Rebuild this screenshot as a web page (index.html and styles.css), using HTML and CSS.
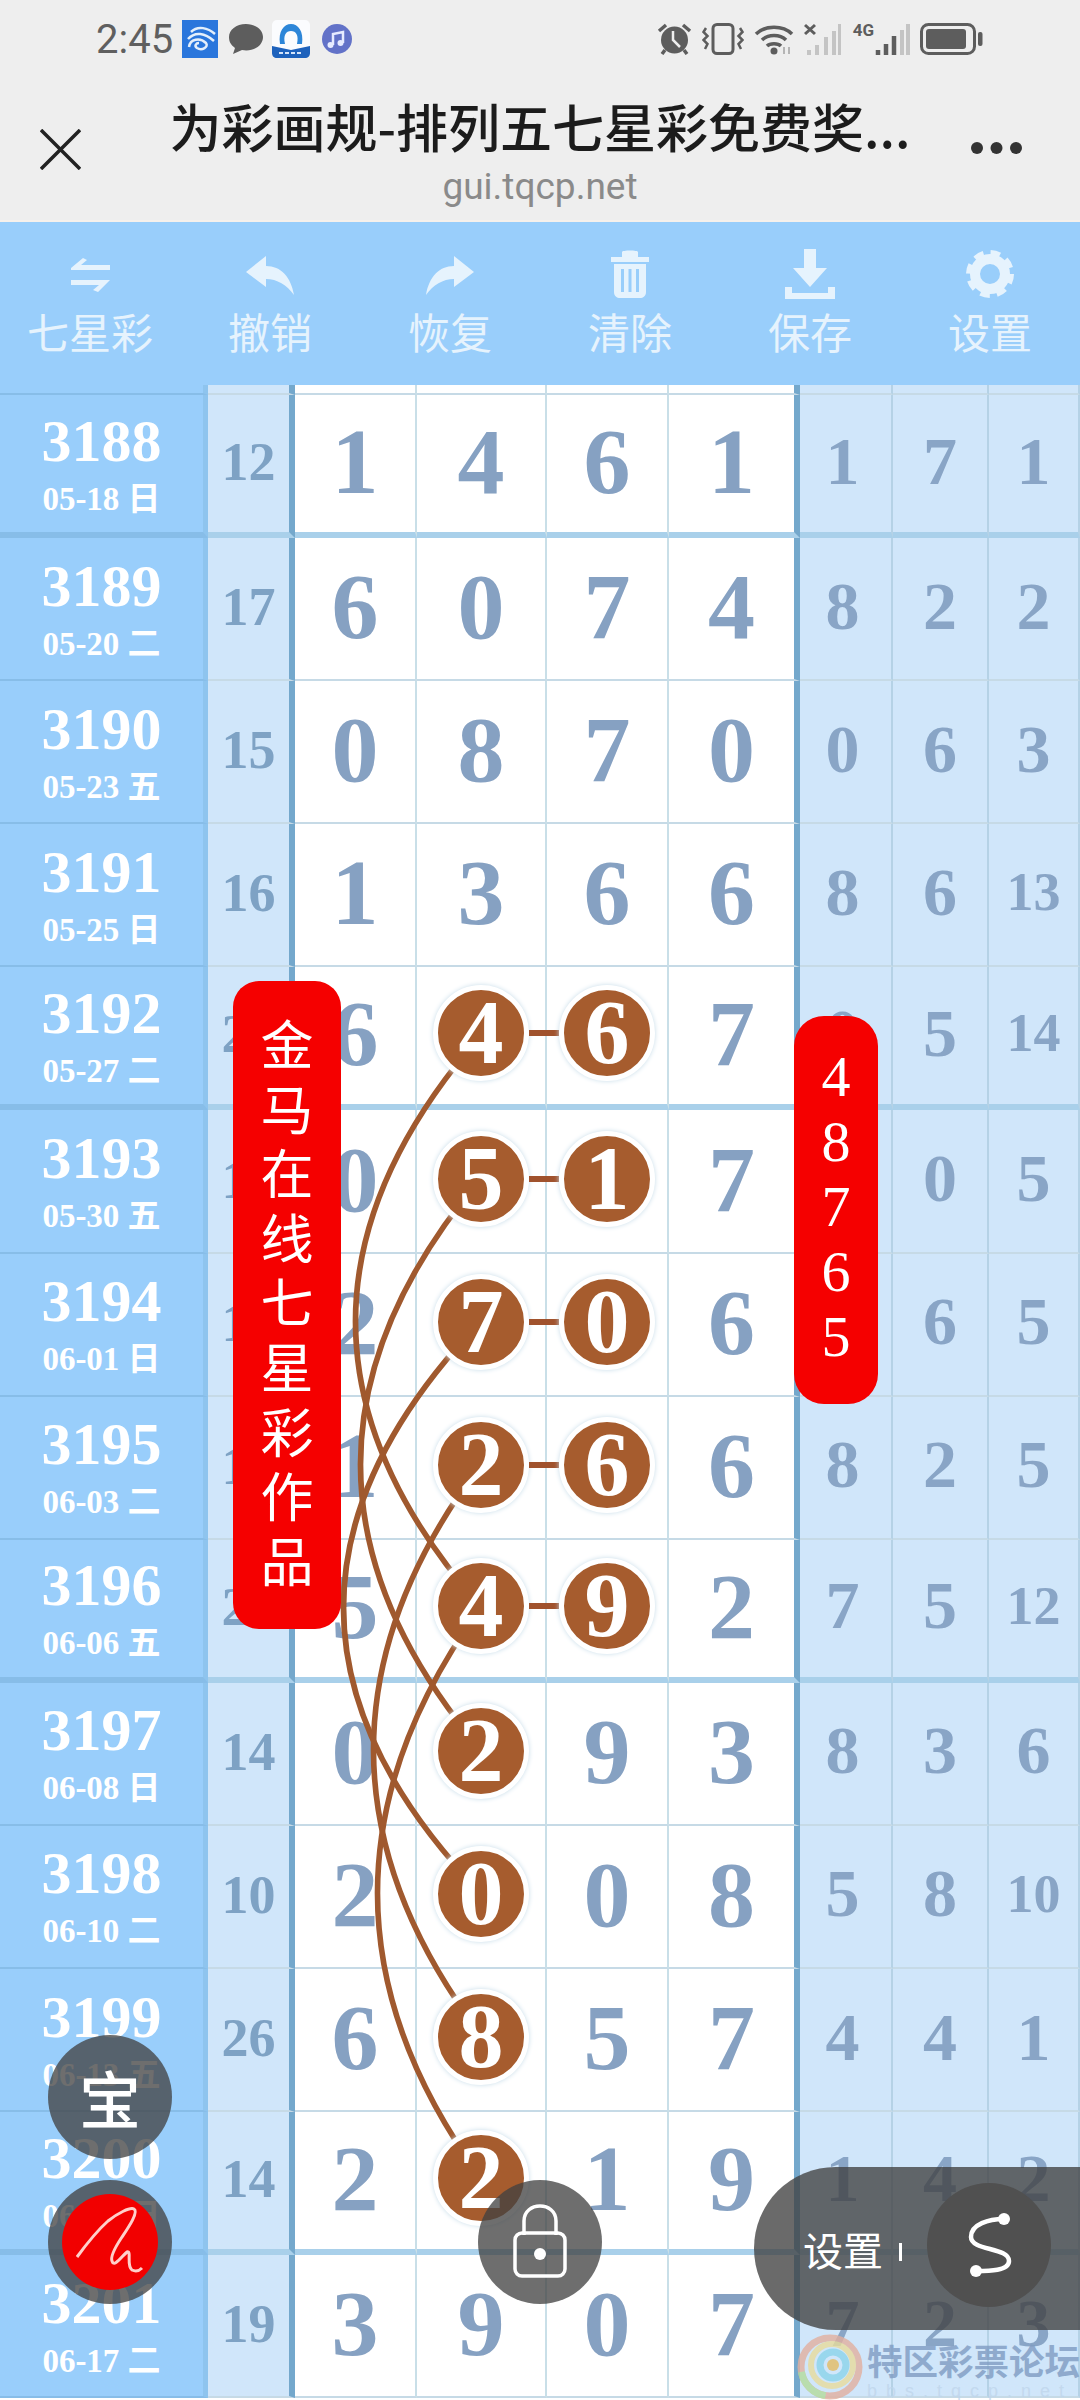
FILE: index.html
```html
<!DOCTYPE html>
<html lang="zh">
<head>
	<meta charset="utf-8">
	<title>为彩画规-排列五七星彩免费奖表</title>
	<link rel="stylesheet" href="styles.css">
</head>
<body>
<div class="page">
	<div class="status">
		<span class="time">2:45</span>
		<svg class="app" width="36" height="38" viewBox="0 0 36 38"><rect width="36" height="38" fill="#2a76dc"/><path d="M9 12C16 5 26 8 33 14M6 19C13 11 23 13 32 21M7 27C8 19 18 17 24 23C27 27 20 31 15 28C12 26 14 23 17 23" fill="none" stroke="#e4effb" stroke-width="2.500"/></svg>
		<svg class="app bubble" width="34" height="32" viewBox="0 0 34 32"><path d="M17 1C7 1 0 7 0 14C0 19 2 22 6 25L4 31L13 27C24 29 34 23 34 14C34 7 27 1 17 1Z" fill="#5d5d5d"/></svg>
		<svg class="app" width="38" height="38" viewBox="0 0 38 38"><rect width="38" height="38" rx="5" fill="#fbfcfe"/><path d="M8 24C6 11 12 4 19 4C26 4 32 11 30 24L25 24C27 15 24 11 19 11C14 11 11 15 13 24Z" fill="#2d86d8"/><path d="M0 26L19 30L38 26V33C38 36 36 38 33 38H5C2 38 0 36 0 33Z" fill="#1e62bc"/><path d="M7 33H31" stroke="#d6e6fb" stroke-width="2" stroke-dasharray="4 2"/></svg>
		<svg class="app" width="32" height="32" viewBox="0 0 32 32"><circle cx="16" cy="16" r="15" fill="#6272c8"/><path d="M12 22V11L22 9V20" fill="none" stroke="#e6ebff" stroke-width="2.500"/><circle cx="9.500" cy="22" r="3" fill="#e6ebff"/><circle cx="19.500" cy="20" r="3" fill="#e6ebff"/></svg>
		<span class="status-gap"></span>
		<svg width="35" height="32" viewBox="0 0 35 32"><circle cx="17.500" cy="17" r="13.500" fill="#5d5d5d"/><path d="M16 8V17L23 24" fill="none" stroke="#eeeeee" stroke-width="2.500"/><path d="M2 8L9 2M33 8L26 2M8 27L5 31M27 27L30 31" stroke="#5d5d5d" stroke-width="3.500"/></svg>
		<svg width="42" height="32" viewBox="0 0 42 32"><rect x="11" y="1.500" width="20" height="29" rx="4" fill="none" stroke="#5d5d5d" stroke-width="3"/><path d="M4 5L1.500 9L5.500 13L1.500 17L5.500 21L3 26M38 5L40.500 9L36.500 13L40.500 17L36.500 21L39 26" fill="none" stroke="#5d5d5d" stroke-width="2.500"/></svg>
		<svg width="40" height="32" viewBox="0 0 40 32"><path d="M2 11C11 2 29 2 38 11M8 17C14 11 26 11 32 17M13 23C16 20 24 20 27 23" fill="none" stroke="#5d5d5d" stroke-width="3.500"/><circle cx="20" cy="28" r="3.500" fill="#5d5d5d"/><path d="M30 24V31M35 31V24" stroke="#b5b5b5" stroke-width="2"/></svg>
		<svg width="37" height="32" viewBox="0 0 37 32"><path d="M1 2L11 11M11 2L1 11" stroke="#5d5d5d" stroke-width="3"/><path d="M5 32V27M13 32V22M22 32V14M30 32V8M36 32V1" stroke="#c4c4c4" stroke-width="4"/></svg>
		<span class="net">4G</span>
		<svg class="bars" width="35" height="32" viewBox="0 0 35 32"><path d="M3 32V27M11 32V21M19 32V13" stroke="#5d5d5d" stroke-width="4.500"/><path d="M27 32V7M33 32V1" stroke="#c4c4c4" stroke-width="4"/></svg>
		<svg width="63" height="32" viewBox="0 0 63 32"><rect x="1.500" y="1.500" width="53" height="29" rx="7" fill="none" stroke="#5d5d5d" stroke-width="3"/><rect x="6" y="6" width="40" height="20" rx="3" fill="#5d5d5d"/><rect x="58" y="9" width="4.500" height="14" rx="2" fill="#5d5d5d"/></svg>
	</div>

	<div class="titlebar">
		<svg class="close" width="41" height="41" viewBox="0 0 41 41"><path d="M1 1L40 40M40 1L1 40" stroke="#222" stroke-width="3.500"/></svg>
		<div class="title-box">
			<div class="title">为彩画规-排列五七星彩免费奖...</div>
			<div class="domain">gui.tqcp.net</div>
		</div>
		<svg class="more" width="53" height="14" viewBox="0 0 53 14"><circle cx="7" cy="7" r="6" fill="#333"/><circle cx="26.500" cy="7" r="6" fill="#333"/><circle cx="46" cy="7" r="6" fill="#333"/></svg>
	</div>

	<div class="toolbar">
		<div class="tool">
			<svg width="50" height="50" viewBox="0 0 50 50"><path d="M6 19L18 9L22 11L16 16H45V21H6ZM6 31H45L33 43L28 41L34 36H6Z" fill="#e6f3fd"/></svg>
			<span>七星彩</span>
		</div>
		<div class="tool">
			<svg width="50" height="50" viewBox="0 0 50 50"><path d="M21 7L1 23L21 38V30C32 30 42 36 49 46C46 28 36 17 21 17Z" fill="#e6f3fd"/></svg>
			<span>撤销</span>
		</div>
		<div class="tool">
			<svg class="flip" width="50" height="50" viewBox="0 0 50 50"><path d="M21 7L1 23L21 38V30C32 30 42 36 49 46C46 28 36 17 21 17Z" fill="#e6f3fd"/></svg>
			<span>恢复</span>
		</div>
		<div class="tool">
			<svg width="50" height="50" viewBox="0 0 50 50"><path d="M6 8H17V3C17 1 33 1 33 3V8H44V13H6ZM9 15H41V43C41 47 38 49 35 49H15C12 49 9 47 9 43Z" fill="#e6f3fd"/><path d="M17.500 20V43M25 20V43M32.500 20V43" stroke="#99cefb" stroke-width="3"/></svg>
			<span>清除</span>
		</div>
		<div class="tool">
			<svg width="50" height="50" viewBox="0 0 50 50"><path d="M19 0H31V19H42L25 38L8 19H19ZM0 38H7V44H43V38H50V50H0Z" fill="#e6f3fd"/></svg>
			<span>保存</span>
		</div>
		<div class="tool">
			<svg width="50" height="50" viewBox="0 0 50 50"><circle cx="25" cy="25" r="15" fill="none" stroke="#e6f3fd" stroke-width="10"/><circle cx="25" cy="25" r="20" fill="none" stroke="#e6f3fd" stroke-width="8" stroke-dasharray="9 6.700"/></svg>
			<span>设置</span>
		</div>
	</div>

	<div class="board">
		<div class="row stub"><div class="c-id"></div><div class="c-sum"></div><div class="c-n"></div><div class="c-n"></div><div class="c-n"></div><div class="c-n end"></div><div class="c-r"></div><div class="c-r"></div><div class="c-r"></div></div>

		<div class="row thick">
			<div class="c-id"><b>3188</b><small>05-18 日</small></div><div class="c-sum">12</div>
			<div class="c-n">1</div><div class="c-n">4</div><div class="c-n">6</div><div class="c-n end">1</div>
			<div class="c-r">1</div><div class="c-r">7</div><div class="c-r">1</div>
		</div>
		<div class="row">
			<div class="c-id"><b>3189</b><small>05-20 二</small></div><div class="c-sum">17</div>
			<div class="c-n">6</div><div class="c-n">0</div><div class="c-n">7</div><div class="c-n end">4</div>
			<div class="c-r">8</div><div class="c-r">2</div><div class="c-r">2</div>
		</div>
		<div class="row">
			<div class="c-id"><b>3190</b><small>05-23 五</small></div><div class="c-sum">15</div>
			<div class="c-n">0</div><div class="c-n">8</div><div class="c-n">7</div><div class="c-n end">0</div>
			<div class="c-r">0</div><div class="c-r">6</div><div class="c-r">3</div>
		</div>
		<div class="row">
			<div class="c-id"><b>3191</b><small>05-25 日</small></div><div class="c-sum">16</div>
			<div class="c-n">1</div><div class="c-n">3</div><div class="c-n">6</div><div class="c-n end">6</div>
			<div class="c-r">8</div><div class="c-r">6</div><div class="c-r two">13</div>
		</div>
		<div class="row thick">
			<div class="c-id"><b>3192</b><small>05-27 二</small></div><div class="c-sum">20</div>
			<div class="c-n">6</div><div class="c-n"><span class="ball link">4</span></div><div class="c-n"><span class="ball">6</span></div><div class="c-n end">7</div>
			<div class="c-r">0</div><div class="c-r">5</div><div class="c-r two">14</div>
		</div>
		<div class="row">
			<div class="c-id"><b>3193</b><small>05-30 五</small></div><div class="c-sum">13</div>
			<div class="c-n">0</div><div class="c-n"><span class="ball link">5</span></div><div class="c-n"><span class="ball">1</span></div><div class="c-n end">7</div>
			<div class="c-r">4</div><div class="c-r">0</div><div class="c-r">5</div>
		</div>
		<div class="row">
			<div class="c-id"><b>3194</b><small>06-01 日</small></div><div class="c-sum">15</div>
			<div class="c-n">2</div><div class="c-n"><span class="ball link">7</span></div><div class="c-n"><span class="ball">0</span></div><div class="c-n end">6</div>
			<div class="c-r">3</div><div class="c-r">6</div><div class="c-r">5</div>
		</div>
		<div class="row">
			<div class="c-id"><b>3195</b><small>06-03 二</small></div><div class="c-sum">15</div>
			<div class="c-n">1</div><div class="c-n"><span class="ball link">2</span></div><div class="c-n"><span class="ball">6</span></div><div class="c-n end">6</div>
			<div class="c-r">8</div><div class="c-r">2</div><div class="c-r">5</div>
		</div>
		<div class="row thick">
			<div class="c-id"><b>3196</b><small>06-06 五</small></div><div class="c-sum">24</div>
			<div class="c-n">5</div><div class="c-n"><span class="ball link">4</span></div><div class="c-n"><span class="ball">9</span></div><div class="c-n end">2</div>
			<div class="c-r">7</div><div class="c-r">5</div><div class="c-r two">12</div>
		</div>
		<div class="row">
			<div class="c-id"><b>3197</b><small>06-08 日</small></div><div class="c-sum">14</div>
			<div class="c-n">0</div><div class="c-n"><span class="ball">2</span></div><div class="c-n">9</div><div class="c-n end">3</div>
			<div class="c-r">8</div><div class="c-r">3</div><div class="c-r">6</div>
		</div>
		<div class="row">
			<div class="c-id"><b>3198</b><small>06-10 二</small></div><div class="c-sum">10</div>
			<div class="c-n">2</div><div class="c-n"><span class="ball">0</span></div><div class="c-n">0</div><div class="c-n end">8</div>
			<div class="c-r">5</div><div class="c-r">8</div><div class="c-r two">10</div>
		</div>
		<div class="row">
			<div class="c-id"><b>3199</b><small>06-13 五</small></div><div class="c-sum">26</div>
			<div class="c-n">6</div><div class="c-n"><span class="ball">8</span></div><div class="c-n">5</div><div class="c-n end">7</div>
			<div class="c-r">4</div><div class="c-r">4</div><div class="c-r">1</div>
		</div>
		<div class="row thick">
			<div class="c-id"><b>3200</b><small>06-15 日</small></div><div class="c-sum">14</div>
			<div class="c-n">2</div><div class="c-n"><span class="ball">2</span></div><div class="c-n">1</div><div class="c-n end">9</div>
			<div class="c-r">1</div><div class="c-r">4</div><div class="c-r">2</div>
		</div>
		<div class="row">
			<div class="c-id"><b>3201</b><small>06-17 二</small></div><div class="c-sum">19</div>
			<div class="c-n">3</div><div class="c-n">9</div><div class="c-n">0</div><div class="c-n end">7</div>
			<div class="c-r">7</div><div class="c-r">2</div><div class="c-r">3</div>
		</div>

		<svg class="curves" width="1080" height="2015" viewBox="0 385 1080 2015">
			<path d="M481 1035Q230 1322 481 1607"/>
			<path d="M481 1178Q240 1465 481 1750"/>
			<path d="M481 1321Q206 1608 481 1893"/>
			<path d="M481 1464Q266 1750 481 2035"/>
			<path d="M481 1607Q274 1894 481 2178"/>
		</svg>
	</div>

	<div class="pill pill-left">金马在线七星彩作品</div>
	<div class="pill pill-right">48765</div>

	<div class="fab fab-bao">宝</div>
	<div class="fab fab-sign">
		<svg width="96" height="96" viewBox="0 0 96 96"><circle cx="48" cy="48" r="48" fill="#f20000"/><path d="M15 63C26 48 36 36 46 27C56 19 68 13 72 15C77 18 66 34 60 43C54 52 48 62 50 67C52 74 60 62 65 58C70 56 64 72 70 76C74 78 78 76 80 74" fill="none" stroke="#ffcfca" stroke-width="3"/></svg>
	</div>
	<div class="fab fab-lock">
		<svg width="60" height="76" viewBox="0 0 60 76"><path d="M14 32V18C14 -2 46 -2 46 18V32" fill="none" stroke="#fff" stroke-width="3.500"/><rect x="5" y="30" width="50" height="43" rx="7" fill="none" stroke="#fff" stroke-width="3.500"/><circle cx="30" cy="51" r="6" fill="#fff"/></svg>
	</div>
	<div class="dock">
		<span class="dock-text">设置</span>
		<span class="dock-bar"></span>
		<span class="dock-btn">
			<svg width="60" height="76" viewBox="0 0 60 76"><path d="M45 12C30 12 12 17 12 30C12 44 50 40 50 54C50 64 30 64 17 64" fill="none" stroke="#fff" stroke-width="4.500"/><circle cx="45" cy="12" r="6" fill="#fff"/><circle cx="17" cy="64" r="6" fill="#fff"/></svg>
		</span>
	</div>

	<div class="watermark">
		<svg class="wm-logo" width="66" height="66" viewBox="0 0 66 66">
			<circle cx="33" cy="33" r="29" fill="none" stroke="#e2b0a0" stroke-width="7"/>
			<circle cx="33" cy="33" r="29" fill="none" stroke="#b4dc9c" stroke-width="7" stroke-dasharray="36 146" stroke-dashoffset="-50"/>
			<circle cx="35" cy="31" r="21" fill="none" stroke="#e8dc9c" stroke-width="6"/>
			<circle cx="36" cy="31" r="13" fill="none" stroke="#8cd4ea" stroke-width="7"/>
			<circle cx="36" cy="31" r="6" fill="#e4bc64"/>
		</svg>
		<div class="wm-text">
			<div class="wm-name">特区彩票论坛</div>
			<div class="wm-url">bbs.tqcp.net</div>
		</div>
	</div>
</div>
</body>
</html>
```

FILE: styles.css
```css
* {
	box-sizing: border-box;
}
html, body {
	margin: 0;
	padding: 0;
}
.page {
	position: relative;
	width: 1080px;
	height: 2400px;
	overflow: hidden;
	background: #fff;
	font-family: "Noto Sans CJK SC", sans-serif;
}

/* top of the phone */
.status {
	display: flex;
	align-items: center;
	height: 78px;
	padding: 0 97px 0 96px;
	background: #eeeeee;
}
.time {
	font-family: Roboto, sans-serif;
	font-size: 40px;
	color: #5f5f5f;
	margin-right: 9px;
}
.app {
	margin-right: 11px;
}
.bubble {
	margin-left: 0;
	margin-right: 9px;
}
.status-gap {
	flex: 1;
}
.status > svg:not(.app) {
	margin-left: 10px;
}
.status > svg.bars {
	margin-left: 1px;
}
.net {
	font-family: Roboto, sans-serif;
	font-size: 17px;
	font-weight: 700;
	color: #5d5d5d;
	margin: 0 0 18px 12px;
	line-height: 1;
}
.titlebar {
	display: grid;
	grid-template-columns: 150px 1fr 150px;
	align-items: center;
	height: 144px;
	padding-bottom: 2px;
	background: #eeeeee;
	border-bottom: 2px solid #f6f1ec;
}
.close {
	margin-left: 40px;
	margin-top: 2px;
}
.more {
	justify-self: end;
	margin-right: 57px;
}
.title-box {
	align-self: start;
	padding-top: 16px;
	text-align: center;
}
.title {
	font-size: 52px;
	font-weight: 500;
	line-height: 64px;
	color: #1c1c1c;
	white-space: nowrap;
	margin: 0 -5px;
}
.domain {
	font-family: Roboto, sans-serif;
	font-size: 37px;
	line-height: 48px;
	margin-top: 5px;
	color: #8a8a8a;
}

/* tool buttons */
.toolbar {
	display: grid;
	grid-template-columns: repeat(6, 180px);
	height: 163px;
	padding-top: 27px;
	background: #99cefb;
}
.tool {
	display: flex;
	flex-direction: column;
	align-items: center;
	color: #e6f3fd;
	font-size: 42px;
	line-height: 60px;
}
.tool span {
	margin-top: 2px;
}
.flip {
	transform: scaleX(-1);
}

/* the chart */
.board {
	position: relative;
}
.row {
	display: grid;
	grid-template-columns: 208px 87px 122px 130px 122px 131px 93px 96px 91px;
	height: 143.1px;
	font-family: "Liberation Serif", "Noto Sans CJK SC", serif;
	font-weight: 700;
}
.row.stub {
	height: 10px;
}
.row > div {
	display: flex;
	align-items: center;
	justify-content: center;
	border-bottom: 2px solid #c6dae6;
}
.row.thick > div {
	border-bottom: 6px solid #a9d0ea;
}
.c-id {
	flex-direction: column;
	padding-top: 4px;
	background: #99cefb;
	color: #fff;
	border-right: 5px solid #8ec4ee;
	border-bottom-color: #87bde8 !important;
}
.c-id b {
	font-size: 60px;
	line-height: 62px;
}
.c-id small {
	font-size: 33px;
	line-height: 46px;
	margin-top: 4px;
	white-space: nowrap;
}
.c-sum {
	padding-bottom: 3px;
	background: #d0e6fa;
	color: #7ea2c4;
	font-size: 54px;
	border-right: 6px solid #74a8cc;
}
.c-n {
	padding-bottom: 5px;
	color: #86a1c2;
	font-size: 94px;
	border-right: 2px solid #c9dfe8;
}
.c-n.end {
	border-right: 6px solid #74a8cc;
}
.c-r {
	padding-bottom: 5px;
	background: #d0e6fa;
	color: #89a5c6;
	font-size: 68px;
	border-right: 2px solid #b5d2e6;
}
.c-n.end + .c-r {
	padding-right: 6px;
}
.c-r.two {
	font-size: 54px;
}
.ball {
	position: relative;
	z-index: 2;
	display: flex;
	align-items: center;
	justify-content: center;
	width: 96px;
	height: 96px;
	border-radius: 50%;
	background: #a65c2e;
	border: 5px solid #fff;
	box-shadow: 0 0 5px #c5dbe8;
	color: #fff;
	font-size: 90px;
	line-height: 1;
}
.ball.link::after {
	content: "";
	position: absolute;
	left: 91px;
	top: 40px;
	width: 30px;
	height: 6px;
	background: #a0522d;
}
.curves {
	position: absolute;
	left: 0;
	top: 0;
	z-index: 1;
	fill: none;
	stroke: #a0592e;
	stroke-width: 5.5;
}

/* things lying over the chart */
.pill {
	position: absolute;
	z-index: 3;
	background: #f50000;
	color: #fff;
	text-align: center;
	word-break: break-all;
}
.pill-left {
	left: 233px;
	top: 981px;
	width: 108px;
	height: 648px;
	border-radius: 26px;
	padding: 29px 27px 0;
	font-size: 53px;
	line-height: 64.6px;
}
.pill-right {
	left: 794px;
	top: 1016px;
	width: 84px;
	height: 388px;
	border-radius: 30px;
	padding: 28px 26px 0;
	font-family: "Liberation Serif", serif;
	font-size: 58px;
	line-height: 65px;
}
.fab {
	position: absolute;
	z-index: 4;
	display: flex;
	align-items: center;
	justify-content: center;
	width: 124px;
	height: 124px;
	border-radius: 50%;
	background: rgba(64, 64, 64, 0.76);
}
.fab-bao {
	left: 48px;
	top: 2035px;
	color: #fff;
	font-size: 62px;
	font-weight: 500;
}
.fab-sign {
	left: 48px;
	top: 2180px;
}
.fab-lock {
	left: 478px;
	top: 2180px;
	padding-bottom: 2px;
}
.dock {
	position: absolute;
	z-index: 4;
	left: 754px;
	top: 2167px;
	width: 326px;
	height: 163px;
	display: flex;
	align-items: center;
	padding-left: 49px;
	border-radius: 82px 0 0 82px;
	background: rgba(64, 64, 64, 0.78);
	color: #fff;
	font-size: 40px;
}
.dock-bar {
	width: 3px;
	height: 18px;
	margin: 6px 0 0 16px;
	background: #fff;
}
.dock-btn {
	display: flex;
	align-items: center;
	justify-content: center;
	width: 124px;
	height: 124px;
	margin: -8px 0 0 25px;
	border-radius: 50%;
	background: #505050;
}
.watermark {
	position: absolute;
	z-index: 5;
	left: 797px;
	top: 2334px;
	display: flex;
	opacity: 0.8;
}
.wm-logo {
	flex: none;
}
.wm-text {
	margin-left: 4px;
}
.wm-name {
	font-size: 35.5px;
	font-weight: 700;
	line-height: 44px;
	margin-top: 4px;
	color: #7f9cc2;
	white-space: nowrap;
}
.wm-url {
	font-family: "Liberation Sans", sans-serif;
	font-size: 18px;
	line-height: 18px;
	letter-spacing: 9px;
	color: #c0d6ec;
	white-space: nowrap;
}
```
